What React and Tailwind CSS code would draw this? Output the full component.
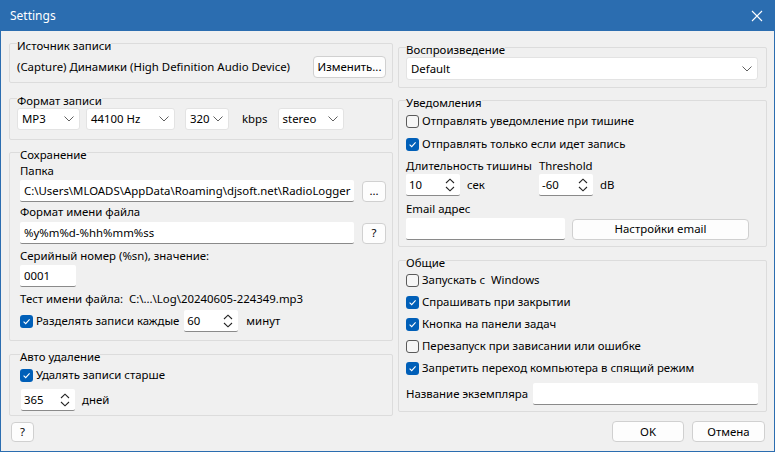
function Group({ title, className = "", children }) {
  return (
    <fieldset className={`border border-[#dcdcdc] rounded-[2px] ${className}`}>
      <legend className="pt-[6px] leading-[12px] px-0">{title}</legend>
      {children}
    </fieldset>
  );
}

function Chevron() {
  return (
    <svg width="10" height="6" viewBox="0 0 10 6">
      <path d="M0.5 0.5 L5 5 L9.5 0.5" stroke="#606060" strokeWidth="1" fill="none" />
    </svg>
  );
}

function Select({ value, w }) {
  return (
    <div className={`flex items-center justify-between h-[22px] bg-white border border-[#e3e3e3] rounded-[3px] pl-[4px] pr-[5px] ${w}`}>
      <span>{value}</span>
      <Chevron />
    </div>
  );
}

function Spin({ value, w = "w-[54px]" }) {
  return (
    <div className={`flex items-center justify-between h-[22px] bg-white border-b border-[#8a8a8a] rounded-[2px] pl-[3px] pr-[5px] ${w}`}>
      <span>{value}</span>
      <svg width="10" height="14" viewBox="0 0 10 14">
        <path d="M1 5 L5 1.2 L9 5 M1 9 L5 12.8 L9 9" stroke="#222" strokeWidth="1.1" fill="none" />
      </svg>
    </div>
  );
}

function Input({ value = "", w }) {
  return (
    <div className={`flex items-center h-[22px] bg-white border-b border-[#8a8a8a] rounded-[2px] pl-[4px] overflow-hidden whitespace-nowrap ${w}`}>
      {value}
    </div>
  );
}

function Btn({ children, className = "" }) {
  return (
    <button className={`flex items-center justify-center bg-[#fdfdfd] border border-[#d0d0d0] rounded-[4px] whitespace-nowrap ${className}`}>
      {children}
    </button>
  );
}

function Check({ checked, label }) {
  return (
    <label className="flex items-center h-[22px] gap-[3px] whitespace-nowrap">
      {checked ? (
        <span className="w-[13px] h-[13px] rounded-[3px] bg-[#005fb8] flex items-center justify-center">
          <svg width="9" height="9" viewBox="0 0 9 9">
            <path d="M1.6 4.6 L3.7 6.6 L7.6 2.4" stroke="white" strokeWidth="1.1" fill="none" />
          </svg>
        </span>
      ) : (
        <span className="w-[13px] h-[13px] rounded-[3px] border border-[#5a5a5a] bg-[#f6f6f6]" />
      )}
      <span>{label}</span>
    </label>
  );
}

export default function App() {
  return (
    <div className="w-[775px] h-[452px] flex flex-col bg-[#f0f0f0] border border-t-0 border-[#2b6db0] text-[11.4px] text-black font-['Noto_Sans',sans-serif] leading-[16px] whitespace-nowrap">
      <div className="h-[31px] shrink-0 bg-[#2b6db0] text-white text-[12px] flex items-center justify-between pl-[9px] pr-[11px]">
        <span>Settings</span>
        <svg width="12" height="12" viewBox="0 0 12 12">
          <path d="M1 1 L11 11 M11 1 L1 11" stroke="white" strokeWidth="1.1" />
        </svg>
      </div>

      <div className="flex flex-1 pl-[8px] pr-[7px] gap-[5px]">
        {/* left column */}
        <div className="w-[384px] flex flex-col">
          <Group title="Источник записи" className="mt-[3px] pl-[7px] pr-[6px] pt-[4px] pb-[4px]">
            <div className="flex items-center justify-between h-[22px]">
              <span>(Capture) Динамики (High Definition Audio Device)</span>
              <Btn className="w-[73px] h-[22px] border-[#0067c0]">Изменить...</Btn>
            </div>
          </Group>

          <Group title="Формат записи" className="mt-[6px] pl-[7px] pt-[1px] pb-[9px]">
            <div className="flex items-center h-[22px]">
              <Select value="MP3" w="w-[63px]" />
              <Select value="44100 Hz" w="w-[89px] ml-[6px]" />
              <Select value="320" w="w-[44px] ml-[10px]" />
              <span className="ml-[13px]">kbps</span>
              <Select value="stereo" w="w-[66px] ml-[10px]" />
            </div>
          </Group>

          <Group title="Сохранение" className="mt-[3px] pl-[10px] pr-[6px] pt-[2px] pb-[8px]">
            <div>Папка</div>
            <div className="flex items-center justify-between mt-[1px]">
              <Input value="C:\Users\MLOADS\AppData\Roaming\djsoft.net\RadioLogger" w="w-[334px]" />
              <Btn className="w-[24px] h-[21px]">...</Btn>
            </div>
            <div className="mt-[2px]">Формат имени файла</div>
            <div className="flex items-center justify-between mt-[2px]">
              <Input value="%y%m%d-%hh%mm%ss" w="w-[334px]" />
              <Btn className="w-[24px] h-[21px]">?</Btn>
            </div>
            <div className="mt-[4px]">Серийный номер (%sn), значение:</div>
            <div className="mt-[1px]">
              <Input value="0001" w="w-[56px]" />
            </div>
            <div className="mt-[4px]">Тест имени файла:&nbsp; C:\...\Log\20240605-224349.mp3</div>
            <div className="flex items-center mt-[3px] h-[22px]">
              <Check checked label="Разделять записи каждые" />
              <Spin value="60" w="w-[54px] ml-[5px]" />
              <span className="ml-[8px]">минут</span>
            </div>
          </Group>

          <Group title="Авто удаление" className="mt-[4px] pl-[10px] pt-[1px] pb-[4px]">
            <Check checked label="Удалять записи старше" />
            <div className="flex items-center mt-[3px]">
              <Spin value="365" w="w-[54px] ml-[1px]" />
              <span className="ml-[7px]">дней</span>
            </div>
          </Group>
        </div>

        {/* right column */}
        <div className="w-[369px] flex flex-col">
          <Group title="Воспроизведение" className="mt-[7px] pl-[7px] pr-[8px] pt-[1px] pb-[7px]">
            <Select value="Default" w="w-full h-[23px]" />
          </Group>

          <Group title="Уведомления" className="mt-[3px] pl-[7px] pr-[8px] pt-[1px] pb-[6px]">
            <div className="flex flex-col gap-[1px]">
              <Check label="Отправлять уведомление при тишине" />
              <Check checked label="Отправлять только если идет запись" />
            </div>
            <div className="flex mt-[3px]">
              <div className="w-[133px]">
                <div>Длительность тишины</div>
                <div className="flex items-center">
                  <Spin value="10" />
                  <span className="ml-[7px]">сек</span>
                </div>
              </div>
              <div>
                <div>Threshold</div>
                <div className="flex items-center">
                  <Spin value="-60" />
                  <span className="ml-[7px]">dB</span>
                </div>
              </div>
            </div>
            <div className="mt-[5px]">Email адрес</div>
            <div className="flex items-center mt-[1px]">
              <Input w="w-[159px]" />
              <Btn className="w-[177px] h-[21px] ml-[7px]">Настройки email</Btn>
            </div>
          </Group>

          <Group title="Общие" className="mt-[4px] pl-[7px] pr-[8px] pb-[6px]">
            <Check label={"Запускать с\u00a0 Windows"} />
            <Check checked label="Спрашивать при закрытии" />
            <Check checked label="Кнопка на панели задач" />
            <Check label="Перезапуск при зависании или ошибке" />
            <Check checked label="Запретить переход компьютера в спящий режим" />
            <div className="flex items-center justify-between mt-[4px]">
              <span>Название экземпляра</span>
              <Input w="w-[225px]" />
            </div>
          </Group>
        </div>
      </div>

      <div className="flex items-center justify-between h-[21px] mb-[9px] pl-[10px] pr-[9px]">
        <Btn className="w-[23px] h-[20px]">?</Btn>
        <div className="flex gap-[8px]">
          <Btn className="w-[72px] h-[21px]">OK</Btn>
          <Btn className="w-[73px] h-[21px]">Отмена</Btn>
        </div>
      </div>
    </div>
  );
}
